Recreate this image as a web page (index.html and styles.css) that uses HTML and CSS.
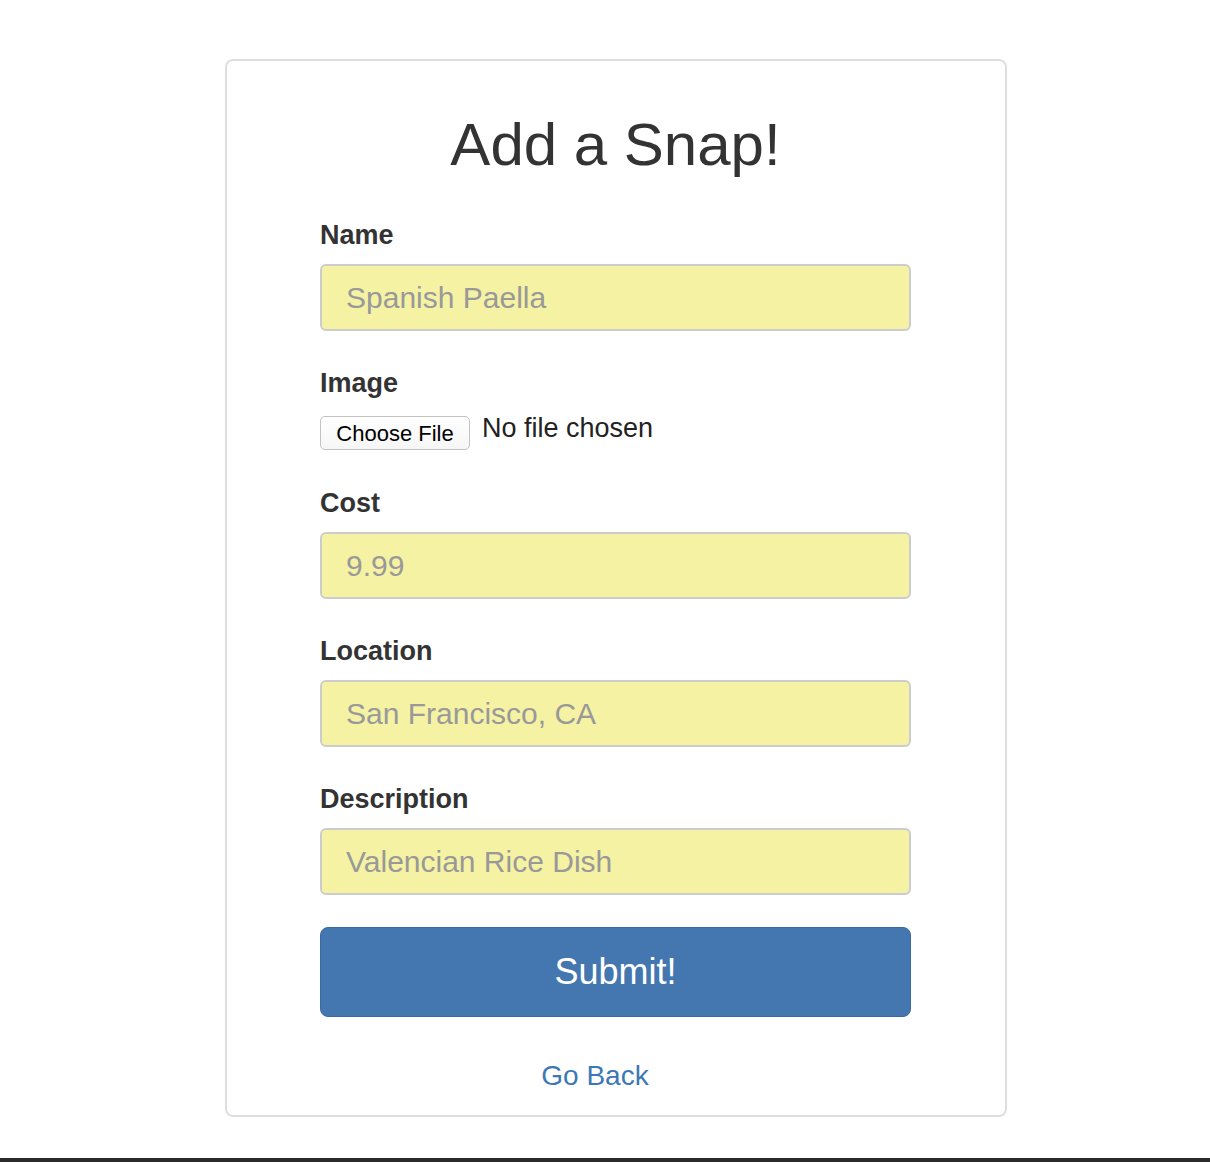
FILE: index.html
```html
<!DOCTYPE html>
<html lang="en">
<head>
<meta charset="utf-8">
<title>Add a Snap!</title>
<link rel="stylesheet" href="styles.css">
</head>
<body>
<div class="card">
  <h1 class="title">Add a Snap!</h1>
  <form class="form">
    <div class="group">
      <label class="label">Name</label>
      <div class="field"><span class="ph">Spanish Paella</span></div>
    </div>
    <div class="group">
      <label class="label">Image</label>
      <div class="file-row">
        <span class="file-btn">Choose File</span>
        <span class="file-text">No file chosen</span>
      </div>
    </div>
    <div class="group">
      <label class="label">Cost</label>
      <div class="field"><span class="ph">9.99</span></div>
    </div>
    <div class="group">
      <label class="label">Location</label>
      <div class="field"><span class="ph">San Francisco, CA</span></div>
    </div>
    <div class="group last">
      <label class="label">Description</label>
      <div class="field"><span class="ph">Valencian Rice Dish</span></div>
    </div>
    <div class="submit">Submit!</div>
    <p class="back"><a class="back-link" href="#">Go Back</a></p>
  </form>
</div>
<div class="footer-bar"></div>
</body>
</html>
```

FILE: styles.css
```css
html, body {
  margin: 0;
  padding: 0;
  background: #fff;
  font-family: "Liberation Sans", Arial, Helvetica, sans-serif;
  color: #333;
  overflow: hidden;
}

.card {
  box-sizing: border-box;
  width: 782px;
  margin: 59px 0 0 225px;
  border: 2px solid #dedede;
  border-radius: 8px;
  padding: 51px 94px 23px 93px;
}

.title {
  margin: 0 0 39px;
  font-size: 60px;
  font-weight: normal;
  line-height: 66px;
  text-align: center;
  color: #333;
}

.form {
  display: flex;
  flex-direction: column;
}

.group {
  display: flex;
  flex-direction: column;
  margin-bottom: 34px;
}

.group.last {
  margin-bottom: 32px;
}

.label {
  display: block;
  font-size: 27px;
  font-weight: bold;
  line-height: 32px;
  padding-top: 2px;
  margin-bottom: 13px;
  color: #333;
}

.field {
  box-sizing: border-box;
  height: 67px;
  border: 2px solid #cccccc;
  border-radius: 6px;
  background: #f5f2a4;
  padding: 1px 24px 0;
  display: flex;
  align-items: center;
}

.ph {
  font-size: 30px;
  color: #999;
}

.file-row {
  display: flex;
  align-items: flex-start;
  height: 39px;
}

.file-btn {
  box-sizing: border-box;
  margin-top: 4px;
  height: 34px;
  width: 150px;
  border: 1px solid #c2c2c2;
  border-radius: 5px;
  background: linear-gradient(#ffffff, #f6f6f6);
  font-size: 22px;
  line-height: 33px;
  text-align: center;
  color: #000;
  margin-right: 12px;
}

.file-text {
  font-size: 27px;
  line-height: 30px;
  margin-top: 1px;
  color: #222;
}

.submit {
  box-sizing: border-box;
  height: 90px;
  border: 1px solid #3a6aa2;
  border-radius: 8px;
  background: #4477b0;
  color: #fff;
  font-size: 36px;
  display: flex;
  align-items: center;
  justify-content: center;
}

.back {
  margin: 43px 0 0;
  text-align: center;
  padding-right: 41px;
  font-size: 28px;
  line-height: 32px;
}

.back-link {
  font-size: 28px;
  color: #3d78b6;
  text-decoration: none;
}

.footer-bar {
  margin-top: 41px;
  height: 40px;
  background: #2b2b2b;
}
```
